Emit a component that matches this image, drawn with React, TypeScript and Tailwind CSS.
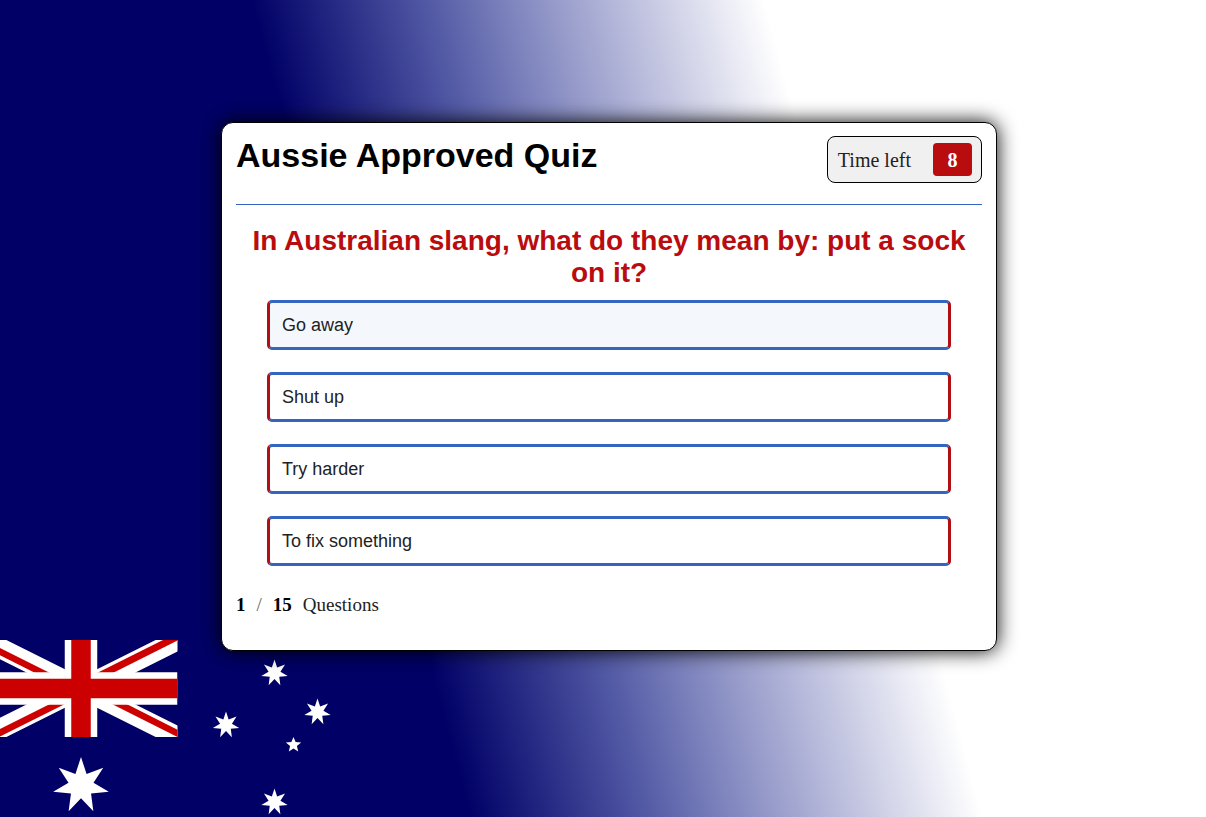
import { useState } from "react";

const answers = ["Go away", "Shut up", "Try harder", "To fix something"];

function starPoints(cx: number, cy: number, r: number, tips: number, inner: number) {
  return Array.from({ length: tips * 2 }, (_, i) => {
    const radius = i % 2 ? r * inner : r;
    const a = (Math.PI * i) / tips - Math.PI / 2;
    return `${(cx + radius * Math.cos(a)).toFixed(2)},${(cy + radius * Math.sin(a)).toFixed(2)}`;
  }).join(" ");
}

const stars = [
  { x: 81, y: 145.5, r: 28.5, tips: 7, inner: 0.45 },
  { x: 274.5, y: 33, r: 13.5, tips: 7, inner: 0.45 },
  { x: 226, y: 85, r: 13.5, tips: 7, inner: 0.45 },
  { x: 317.5, y: 72, r: 13.5, tips: 7, inner: 0.45 },
  { x: 293.5, y: 105, r: 8, tips: 5, inner: 0.45 },
  { x: 274.5, y: 162, r: 13.5, tips: 7, inner: 0.45 },
];

function Flag() {
  return (
    <svg className="absolute bottom-0 left-0" width="360" height="177" viewBox="0 0 360 177" aria-hidden="true">
      <defs>
        <clipPath id="canton">
          <rect x="-16" y="0" width="193.5" height="97" />
        </clipPath>
      </defs>
      <g clipPath="url(#canton)">
        <path d="M-36 -10L198 107M-36 107L198 -10" stroke="#fff" strokeWidth="20" />
        <path d="M-16 0L-30 0L81 56L81 48.5Z" fill="#c00" />
        <path d="M177.5 97L192 97L81 41L81 48.5Z" fill="#c00" />
        <path d="M178.5 0L163 0L81 41L81 49Z" fill="#c00" />
        <path d="M-16 97L-1 97L81 56L81 48.5Z" fill="#c00" />
        <path d="M81 0V97M-16 48.5H177.5" stroke="#fff" strokeWidth="32.5" />
        <path d="M81 0V97M-16 48.5H177.5" stroke="#c00" strokeWidth="19.5" />
      </g>
      {stars.map((s) => (
        <polygon key={`${s.x}-${s.y}`} points={starPoints(s.x, s.y, s.r, s.tips, s.inner)} fill="#fff" />
      ))}
    </svg>
  );
}

export default function App() {
  const [selected, setSelected] = useState(0);

  return (
    <div className="relative flex min-h-screen flex-col items-center overflow-hidden bg-[linear-gradient(75deg,#000066_33%,#5057a3_45%,#858bc1_52%,#b2b5d8_58%,#fff_69%)] px-4 pt-[122px] pb-8">
      <Flag />
      <main className="relative ml-3 w-full max-w-[776px] rounded-xl border border-black bg-white px-3.5 pt-[13px] pb-[33px] font-['Liberation_Serif',serif] shadow-[0_0_20px_#000]">
        <header className="flex items-start justify-between border-b border-b-[#3465c0] pb-[21px]">
          <h1 className="font-['Liberation_Sans',sans-serif] text-[34px] leading-[38px] font-bold text-black">
            Aussie Approved Quiz
          </h1>
          <div className="flex items-center gap-[22px] rounded-lg border border-black bg-[#f0f0f0] py-1.5 pr-[9px] pl-2.5">
            <span className="text-[20px] leading-6 text-[#222]">Time left</span>
            <span className="flex h-[33px] w-[39px] items-center justify-center rounded bg-[#b90c0f] text-[20px] leading-6 font-bold text-white">
              8
            </span>
          </div>
        </header>
        <section>
          <h2 className="pt-5 text-center font-['Liberation_Sans',sans-serif] text-[28px] leading-8 font-bold text-[#b90c0f]">
            In Australian slang, what do they mean by: put a sock on it?
          </h2>
          <div className="mx-[31px] mt-[11px] flex flex-col gap-[22px]">
            {answers.map((answer, i) => (
              <button
                key={answer}
                type="button"
                onClick={() => setSelected(i)}
                className={`h-[50px] rounded-[5px] border-3 border-x-[#b01014] border-y-[#3465c0] px-3 text-left font-['Liberation_Sans',sans-serif] text-[18px] text-[#222] ${
                  selected === i ? "bg-[#f4f8fd]" : "bg-white"
                }`}
              >
                {answer}
              </button>
            ))}
          </div>
        </section>
        <footer className="mt-[27px] flex gap-[11px] text-[19px] leading-6 text-black">
          <b>1</b>
          <span className="text-[#666]">/</span>
          <b>15</b>
          <span className="text-[#222]">Questions</span>
        </footer>
      </main>
    </div>
  );
}
